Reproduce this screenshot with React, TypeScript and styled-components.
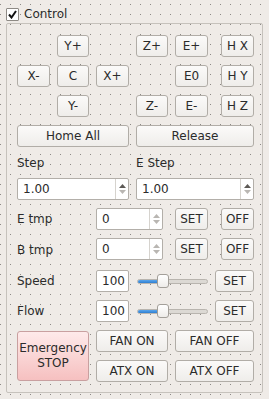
import React from 'react';
import styled, { createGlobalStyle } from 'styled-components';

const GlobalStyle = createGlobalStyle`
    html, body {
        margin: 0;
        padding: 0;
    }
    body {
        width: 269px;
        height: 399px;
        overflow: hidden;
        background-color: #efebe7;
        background-image: conic-gradient(from 270deg at 1px 1px, #8d8a86 90deg, transparent 0);
        background-size: 10px 10px;
        background-position: 0px 4px;
        font-family: 'DejaVu Sans', 'Liberation Sans', sans-serif;
        font-size: 12px;
        color: #2b2b2b;
    }
`;

const Page = styled.div`
    padding: 6px 0 0 6px;
`;

const Header = styled.label`
    display: flex;
    align-items: center;
    gap: 5px;
    height: 14px;
    margin-top: 1px;
`;

const CheckBox = styled.span`
    width: 11px;
    height: 11px;
    border: 1px solid #8e8a85;
    border-radius: 1px;
    background: #ffffff;
    display: flex;
    align-items: center;
    justify-content: center;
`;

const Frame = styled.div`
    margin-top: 2px;
    width: 255px;
    height: 368px;
    border: 1px solid #c6c2bc;
    border-radius: 2px;
    box-sizing: content-box;
`;

const Grid = styled.div`
    display: grid;
    grid-template-columns: 33px 32px 33px 32px 33px 39px;
    grid-template-rows: 22px 22px 22px 22px 15px 22px 22px 24px 22px 22px 22px 22px;
    column-gap: 7px;
    row-gap: 8px;
    padding: 11px 0 0 10px;
`;

const Button = styled.button<{ $col: string; $row?: string; $right?: boolean }>`
    grid-column: ${p => p.$col};
    grid-row: ${p => p.$row ?? 'auto'};
    justify-self: ${p => (p.$right ? 'end' : 'stretch')};
    width: ${p => (p.$right ? '33px' : 'auto')};
    height: 22px;
    margin: 0;
    padding: 0;
    border: 1px solid #b1ada7;
    border-radius: 3px;
    background: linear-gradient(#fbfaf9, #efedea);
    font-family: inherit;
    font-size: 12px;
    color: #2b2b2b;
    white-space: nowrap;
`;

const StopButton = styled.button`
    grid-column: 1 / 3;
    grid-row: 11 / 13;
    align-self: center;
    height: 50px;
    margin: 0;
    padding: 0;
    border: 1px solid #c9a0a0;
    border-radius: 3px;
    background: linear-gradient(#feeaea, #f6c0c0);
    font-family: inherit;
    font-size: 12px;
    line-height: 15px;
    color: #2b2b2b;
`;

const Label = styled.div<{ $col: string }>`
    grid-column: ${p => p.$col};
    display: flex;
    align-items: center;
    white-space: nowrap;
`;

const Field = styled.div<{ $col: string; $width?: number }>`
    grid-column: ${p => p.$col};
    width: ${p => (p.$width ? `${p.$width}px` : 'auto')};
    display: flex;
    align-items: center;
    height: 22px;
    box-sizing: border-box;
    border: 1px solid #b3afa9;
    border-radius: 2px;
    background: #ffffff;
`;

const FieldText = styled.span`
    flex: 1;
    padding-left: 5px;
`;

const Arrows = styled.div`
    width: 12px;
    height: 100%;
    border-left: 1px solid #d6d3ce;
    display: flex;
    flex-direction: column;
    align-items: center;
    justify-content: center;
    gap: 2px;
`;

const SliderBox = styled.div`
    grid-column: 4 / 6;
    position: relative;
    display: flex;
    align-items: center;
`;

const Groove = styled.div`
    width: 71px;
    margin-left: 1px;
    height: 5px;
    box-sizing: border-box;
    border: 1px solid #b9b5af;
    border-radius: 3px;
    background: #dcd9d4;
    overflow: hidden;
`;

const GrooveFill = styled.div`
    height: 100%;
    background: linear-gradient(#5aa5ec, #2f7fd1);
`;

const Handle = styled.div`
    position: absolute;
    top: 4px;
    width: 12px;
    height: 14px;
    box-sizing: border-box;
    border: 1px solid #a39f99;
    border-radius: 3px;
    background: linear-gradient(#ffffff, #eeece9);
`;

const Check: React.FC = () => (
    <svg width="9" height="9" viewBox="0 0 9 9">
        <path d="M1 4.5 L3.5 7.5 L8 1" fill="none" stroke="#111" strokeWidth="2" />
    </svg>
);

const Tri: React.FC<{ down?: boolean; muted?: boolean }> = ({ down, muted }) => (
    <svg width="7" height="4" viewBox="0 0 7 4">
        <polygon
            points={down ? '0,0 7,0 3.5,4' : '3.5,0 7,4 0,4'}
            fill={muted ? '#b9b6b2' : '#5d5a56'}
        />
    </svg>
);

const Spin: React.FC<{ col: string; value: string; width?: number; muted?: boolean }> = ({
    col,
    value,
    width,
    muted,
}) => (
    <Field $col={col} $width={width}>
        <FieldText>{value}</FieldText>
        <Arrows>
            <Tri muted={muted} />
            <Tri down muted />
        </Arrows>
    </Field>
);

const Slider: React.FC<{ fill: number }> = ({ fill }) => (
    <SliderBox>
        <Groove>
            <GrooveFill style={{ width: `${fill}px` }} />
        </Groove>
        <Handle style={{ left: `${fill + 1}px` }} />
    </SliderBox>
);

export default function App() {
    return (
        <>
            <GlobalStyle />
            <Page>
                <Header>
                    <CheckBox><Check /></CheckBox>
                    Control
                </Header>
                <Frame>
                    <Grid>
                        <Button $col="2" $row="1">Y+</Button>
                        <Button $col="4" $row="1">Z+</Button>
                        <Button $col="5" $row="1">E+</Button>
                        <Button $col="6" $row="1" $right>H X</Button>

                        <Button $col="1" $row="2">X-</Button>
                        <Button $col="2" $row="2">C</Button>
                        <Button $col="3" $row="2">X+</Button>
                        <Button $col="5" $row="2">E0</Button>
                        <Button $col="6" $row="2" $right>H Y</Button>

                        <Button $col="2" $row="3">Y-</Button>
                        <Button $col="4" $row="3">Z-</Button>
                        <Button $col="5" $row="3">E-</Button>
                        <Button $col="6" $row="3" $right>H Z</Button>

                        <Button $col="1 / 4" $row="4">Home All</Button>
                        <Button $col="4 / 7" $row="4">Release</Button>

                        <Label $col="1 / 4">Step</Label>
                        <Label $col="4 / 7">E Step</Label>

                        <Spin col="1 / 4" value="1.00" />
                        <Spin col="4 / 7" value="1.00" />

                        <Label $col="1 / 3">E tmp</Label>
                        <Spin col="3 / 5" value="0" width={67} muted />
                        <Button $col="5">SET</Button>
                        <Button $col="6" $right>OFF</Button>

                        <Label $col="1 / 3">B tmp</Label>
                        <Spin col="3 / 5" value="0" width={67} muted />
                        <Button $col="5">SET</Button>
                        <Button $col="6" $right>OFF</Button>

                        <Label $col="1 / 3">Speed</Label>
                        <Field $col="3"><FieldText>100</FieldText></Field>
                        <Slider fill={20} />
                        <Button $col="6">SET</Button>

                        <Label $col="1 / 3">Flow</Label>
                        <Field $col="3"><FieldText>100</FieldText></Field>
                        <Slider fill={20} />
                        <Button $col="6">SET</Button>

                        <StopButton>Emergency<br />STOP</StopButton>
                        <Button $col="3 / 5" $row="11">FAN ON</Button>
                        <Button $col="5 / 7" $row="11">FAN OFF</Button>
                        <Button $col="3 / 5" $row="12">ATX ON</Button>
                        <Button $col="5 / 7" $row="12">ATX OFF</Button>
                    </Grid>
                </Frame>
            </Page>
        </>
    );
}
